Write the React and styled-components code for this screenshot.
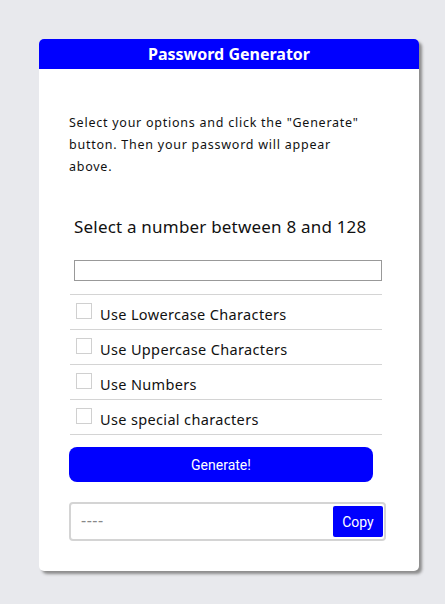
import React, { useState } from 'react'
import styled, { createGlobalStyle } from 'styled-components'

const GlobalStyle = createGlobalStyle`
  html, body {
    margin: 0;
    padding: 0;
    background: #e8e9ed;
  }
  body {
    font-family: "Noto Sans", "Open Sans", sans-serif;
  }
`

const Page = styled.div`
  padding: 39px 0 0 39px;
  min-height: 604px;
  box-sizing: border-box;
`

const Card = styled.div`
  width: 380px;
  height: 532px;
  background: #fff;
  border-radius: 5px;
  box-shadow: 3px 3px 3px #8c8c8c;
  overflow: hidden;
  display: flex;
  flex-direction: column;
`

const Header = styled.h1`
  margin: 0;
  height: 30px;
  background: #0000ff;
  color: #fff;
  font-size: 16px;
  font-weight: 700;
  text-align: center;
  line-height: 30px;
`

const Body = styled.div`
  padding: 43px 30px 0 30px;
  display: flex;
  flex-direction: column;
`

const Intro = styled.p`
  margin: 0;
  max-width: 300px;
  font-size: 12.5px;
  line-height: 22px;
  letter-spacing: 0.75px;
  color: #111;
`

const Prompt = styled.h2`
  margin: 37px 0 0 5px;
  font-size: 17px;
  font-weight: 400;
  color: #111;
  letter-spacing: 0.2px;
`

const NumberInput = styled.input`
  margin: 22px 0 0 5px;
  width: 308px;
  height: 21px;
  box-sizing: border-box;
  border: 1px solid #999;
  outline: none;
`

const Options = styled.div`
  margin: 13px 7px 0 1px;
  border-top: 1px solid #d4d4d4;
`

const Option = styled.label`
  display: flex;
  align-items: center;
  gap: 8px;
  height: 35px;
  padding: 3px 0 0 6px;
  box-sizing: border-box;
  border-bottom: 1px solid #d4d4d4;
  font-size: 14.5px;
  letter-spacing: 0.35px;
  color: #111;
`

const Box = styled.input`
  appearance: none;
  margin: 0 0 6px 0;
  width: 16px;
  height: 16px;
  border: 1px solid #d0d0d0;
  background: #fff;
  &:checked {
    background: #0000ff;
  }
`

const GenerateButton = styled.button`
  margin: 12px 0 0 0;
  width: 304px;
  height: 35px;
  border: none;
  border-radius: 8px;
  background: #0000ff;
  color: #fff;
  font-family: Roboto, "Liberation Sans", Arial, sans-serif;
  font-size: 14px;
  cursor: pointer;
`

const Output = styled.div`
  margin: 20px 0 0 0;
  width: 317px;
  height: 39px;
  box-sizing: border-box;
  border: 2px solid #d4d4d4;
  border-radius: 4px;
  display: flex;
  align-items: center;
  padding: 0 1px 0 8px;
`

const Result = styled.input`
  flex: 1;
  min-width: 0;
  margin-bottom: 4px;
  border: none;
  outline: none;
  font-family: "Noto Sans", sans-serif;
  font-size: 16px;
  letter-spacing: 0.5px;
  color: #333;
  &::placeholder {
    color: #888;
  }
`

const CopyButton = styled.button`
  width: 50px;
  height: 31px;
  border: none;
  border-radius: 2px;
  background: #0000ff;
  color: #fff;
  font-family: Roboto, "Liberation Sans", Arial, sans-serif;
  font-size: 14px;
  cursor: pointer;
`

const options = [
  'Use Lowercase Characters',
  'Use Uppercase Characters',
  'Use Numbers',
  'Use special characters',
]

const App = () => {
  const [password, setPassword] = useState('')

  return (
    <>
      <GlobalStyle />
      <Page>
        <Card>
          <Header>Password Generator</Header>
          <Body>
            <Intro>
              Select your options and click the "Generate" button. Then your password will appear above.
            </Intro>
            <Prompt>Select a number between 8 and 128</Prompt>
            <NumberInput type="number" />
            <Options>
              {options.map((o) => (
                <Option key={o}>
                  <Box type="checkbox" />
                  {o}
                </Option>
              ))}
            </Options>
            <GenerateButton>Generate!</GenerateButton>
            <Output>
              <Result placeholder="----" value={password} onChange={(e) => setPassword(e.target.value)} />
              <CopyButton>Copy</CopyButton>
            </Output>
          </Body>
        </Card>
      </Page>
    </>
  )
}

export default App
